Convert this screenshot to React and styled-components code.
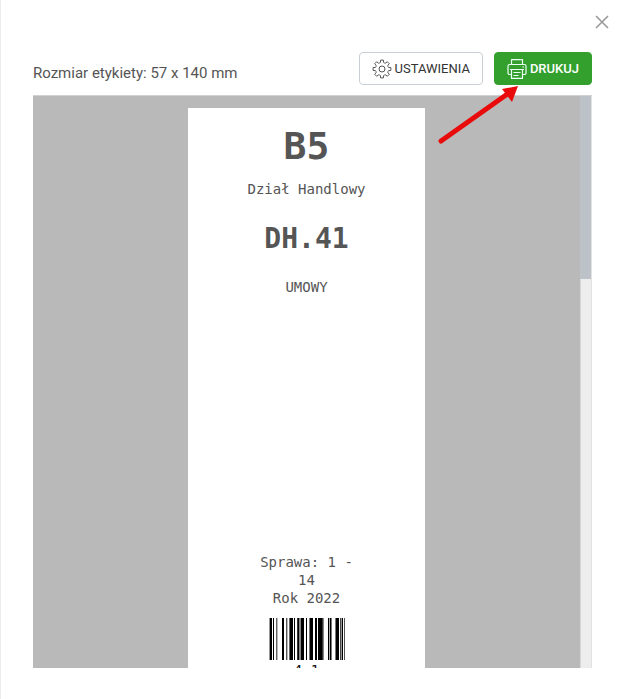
import React from "react";
import styled, { createGlobalStyle, css } from "styled-components";

const GlobalStyle = createGlobalStyle`
  *, *::before, *::after { box-sizing: border-box; }
  body { margin: 0; background: #fff; }
`;

const mono = `"DejaVu Sans Mono", "Liberation Mono", monospace`;

const Dialog = styled.main`
  display: flex;
  flex-direction: column;
  height: 100vh;
  padding: 12px 30px 31px 32px;
  border-left: 1px solid #ededee;
  background: #fff;
  color: #555;
  font-family: Roboto, "Liberation Sans", sans-serif;
`;

const TopBar = styled.header`
  display: flex;
  justify-content: flex-end;
  margin-right: -20px;
  height: 40px;
`;

const CloseButton = styled.button`
  display: flex;
  align-items: center;
  justify-content: center;
  width: 20px;
  height: 20px;
  padding: 0;
  border: 0;
  background: none;
  color: #999;
  cursor: pointer;
`;

const Toolbar = styled.div`
  position: relative;
  display: flex;
  align-items: center;
  gap: 11px;
  height: 33px;
  margin-bottom: 10px;
`;

const SizeLabel = styled.h1`
  flex: 1;
  margin: 0;
  padding-top: 8px;
  color: #555;
  font-size: 15px;
  font-weight: 400;
  line-height: 20px;
  white-space: nowrap;
`;

const ActionButton = styled.button`
  display: flex;
  align-items: center;
  gap: 3px;
  height: 33px;
  padding: 0 12px;
  border: 1px solid #c9cfd4;
  border-radius: 4px;
  background: #fff;
  color: #333;
  font: 400 13px/20px Roboto, "Liberation Sans", sans-serif;
  white-space: nowrap;
  cursor: pointer;
  ${({ $primary }) =>
    $primary &&
    css`
      border-color: #33a02e;
      background: #33a02e;
      color: #fff;
      font-weight: 500;
    `}
`;

const Pointer = styled.svg`
  position: absolute;
  top: 33px;
  right: 72px;
  pointer-events: none;
  z-index: 1;
`;

const Preview = styled.section`
  display: flex;
  flex: 1;
  min-height: 0;
  overflow: hidden;
  border-top: 1px solid #cfd1d2;
  background: #b9b9b9;
`;

const Canvas = styled.div`
  display: flex;
  flex: 1;
  align-items: flex-start;
  justify-content: center;
  padding-top: 12px;
`;

const Track = styled.div`
  width: 12px;
  border-left: 1px solid #d9d9d9;
  border-right: 1px solid #e2e2e2;
  background: #ededed;
`;

const Thumb = styled.div`
  height: 32%;
  margin: 0 0 0 -1px;
  background: #bcc2c7;
`;

const Label = styled.article`
  display: flex;
  flex-direction: column;
  align-items: center;
  width: 237px;
  min-height: 582px;
  padding: 18px 68px 0;
  background: #fff;
  font-family: ${mono};
  text-align: center;
`;

const Heading = styled.h2`
  margin: 0 0 ${({ $gap }) => $gap}px;
  font-size: ${({ $size }) => $size}px;
  line-height: 40px;
  font-weight: 700;
`;

const Line = styled.p`
  margin: 0 0 ${({ $gap = 0 }) => $gap}px;
  font-size: 14px;
  line-height: 18px;
  white-space: ${({ $wrap }) => ($wrap ? "normal" : "nowrap")};
`;

const Barcode = styled.svg`
  display: block;
  flex: none;
  margin: 11px 0 1px;
`;

const Code = styled(Line)`
  color: #111;
`;

const bars = [
  [0, 1, "#999"], [1, 2, "#000"], [4, 1, "#000"], [7, 1, "#666"], [8, 1, "#bbb"],
  [13, 2, "#000"], [17, 1, "#555"], [18, 1, "#bbb"], [20, 1, "#666"], [21, 3, "#000"],
  [25, 1, "#000"], [28, 1, "#333"], [29, 1, "#000"], [30, 2, "#888"], [32, 3, "#000"],
  [37, 1, "#000"], [40, 1, "#777"], [41, 3, "#000"], [46, 2, "#000"], [49, 4, "#000"],
  [53, 1, "#333"], [54, 1, "#888"], [59, 1, "#000"], [60, 1, "#aaa"], [61, 1, "#000"],
  [62, 1, "#777"], [66, 1, "#777"], [67, 3, "#000"], [71, 1, "#444"], [72, 1, "#999"],
  [73, 1, "#000"], [75, 1, "#555"],
];

const gearPath = Array.from({ length: 8 }, (_, i) => {
  const at = (radius, degrees) => {
    const a = ((i * 45 + degrees - 90) * Math.PI) / 180;
    return `${(10 + radius * Math.cos(a)).toFixed(2)} ${(10 + radius * Math.sin(a)).toFixed(2)}`;
  };
  return `${i ? "L" : "M"}${at(9, -9)}L${at(9, 9)}L${at(7, 13)}Q${at(5.8, 22.5)} ${at(7, 32)}`;
}).join("") + "Z";

function GearIcon() {
  return (
    <svg width="20" height="20" viewBox="0 0 20 20" fill="none" stroke="#555" strokeWidth="1" strokeLinejoin="round" aria-hidden="true">
      <path d={gearPath} />
      <circle cx="10" cy="10" r="3" />
    </svg>
  );
}

function PrinterIcon() {
  return (
    <svg width="20" height="20" viewBox="0 0 20 20" fill="none" stroke="#e9fff4" strokeWidth="1.2" strokeLinejoin="round" aria-hidden="true">
      <path d="M4.5 5.5V.6h11v4.900M4.500 15.500H2.500A1.500 1.500 0 0 1 1 14V7a1.500 1.500 0 0 1 1.500-1.500h15A1.500 1.500 0 0 1 19 7v7a1.500 1.500 0 0 1-1.500 1.500h-2M4.500 10.500h11v8.900h-11z" />
      <path d="M6.500 13.500h7M6.500 16.500h5M3 10.500h14M15.500 8h1.500" />
    </svg>
  );
}

export default function App() {
  return (
    <>
      <GlobalStyle />
      <Dialog>
        <TopBar>
          <CloseButton type="button" aria-label="Zamknij">
            <svg width="14" height="14" viewBox="0 0 14 14" stroke="currentColor" strokeWidth="1.6" aria-hidden="true">
              <path d="M1 1l12 12M13 1L1 13" />
            </svg>
          </CloseButton>
        </TopBar>
        <Toolbar>
          <SizeLabel>Rozmiar etykiety: 57 x 140 mm</SizeLabel>
          <ActionButton type="button"><GearIcon />USTAWIENIA</ActionButton>
          <ActionButton type="button" $primary><PrinterIcon />DRUKUJ</ActionButton>
          <Pointer width="82" height="62" viewBox="0 0 82 62" aria-hidden="true">
            <path d="M3 56L68 10" stroke="#e90b0b" strokeWidth="5" strokeLinecap="round" />
            <path d="M80 1L64 4L74 17Z" fill="#e90b0b" />
          </Pointer>
        </Toolbar>
        <Preview aria-label="Podgląd etykiety">
          <Canvas>
            <Label>
              <Heading $size={38} $gap={14}>B5</Heading>
              <Line $gap={21}>Dział Handlowy</Line>
              <Heading $size={28} $gap={19}>DH.41</Heading>
              <Line $gap={257}>UMOWY</Line>
              <Line $wrap>Sprawa: 1 - 14</Line>
              <Line>Rok 2022</Line>
              <Barcode width="76" height="42" viewBox="0 0 76 42" shapeRendering="crispEdges" role="img" aria-label="Kod kreskowy">
                {bars.map(([x, width, fill]) => (
                  <rect key={x} x={x} width={width} height="42" fill={fill} />
                ))}
              </Barcode>
              <Code>4 1</Code>
            </Label>
          </Canvas>
          <Track><Thumb /></Track>
        </Preview>
      </Dialog>
    </>
  );
}
